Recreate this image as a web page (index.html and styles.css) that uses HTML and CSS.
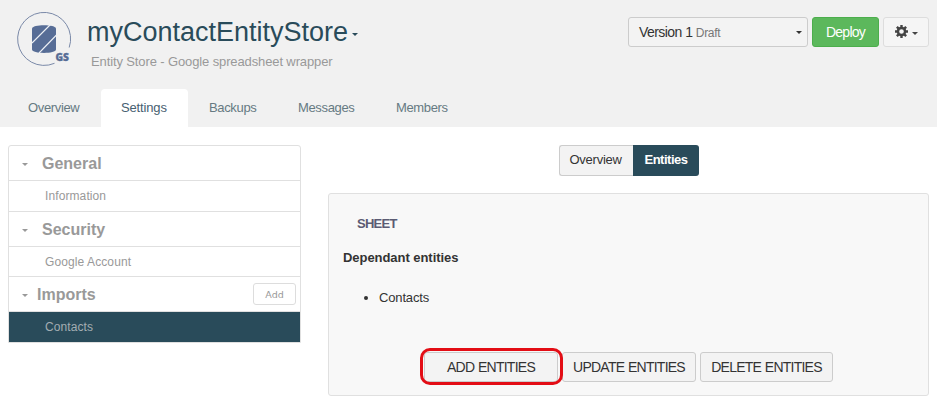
FILE: index.html
```html
<!DOCTYPE html>
<html lang="en">
<head>
<meta charset="utf-8">
<title>myContactEntityStore</title>
<link rel="stylesheet" href="styles.css">
</head>
<body>
<header class="header">
  <div class="masthead">
    <svg class="logo" width="56" height="56" viewBox="0 0 56 56">
      <path d="M38.500 52.300A26.500 26.500 0 1 1 53.200 36.500" fill="none" stroke="#7a89a8" stroke-width="1"/>
      <path d="M16 17.500c0-4.500 24-4.500 24 0v21c0 4.500-24 4.500-24 0z" fill="#576d96"/>
      <path d="M16 32L34.500 13.500M23 42L40.500 24" stroke="#edf0f5" stroke-width="1.100"/>
      <text class="logo-text" x="39.500" y="50" textLength="13.500" lengthAdjust="spacingAndGlyphs">GS</text>
    </svg>
    <div class="heading">
      <h1 class="title"><span>myContactEntityStore</span><i class="caret"></i></h1>
      <p class="subtitle">Entity Store - Google spreadsheet wrapper</p>
    </div>
    <div class="actions">
      <div class="version"><span>Version 1 <small>Draft</small></span><i class="caret"></i></div>
      <button class="deploy">Deploy</button>
      <button class="gear">
        <svg width="13" height="13" viewBox="0 0 12 12"><circle cx="6" cy="6" r="3.300" fill="none" stroke="#444" stroke-width="2.300"/><path d="M6 0v2M6 10v2M0 6h2M10 6h2M1.700 1.700l1.500 1.500M8.800 8.800l1.500 1.500M10.300 1.700L8.800 3.200M3.200 8.800l-1.500 1.500" stroke="#444" stroke-width="2.200"/></svg>
        <i class="caret"></i>
      </button>
    </div>
  </div>
  <nav class="tabs">
    <a class="tab tab-first">Overview</a><a class="tab active">Settings</a><a class="tab tab-backups">Backups</a><a class="tab tab-messages">Messages</a><a class="tab tab-members">Members</a>
  </nav>
</header>
<main class="content">
  <aside class="sidebar">
    <div class="group"><i class="caret"></i><b class="indented">General</b></div>
    <div class="item">Information</div>
    <div class="group"><i class="caret"></i><b class="indented">Security</b></div>
    <div class="item item-short">Google Account</div>
    <div class="group"><i class="caret"></i><b>Imports</b><button class="add">Add</button></div>
    <div class="item item-short selected">Contacts</div>
  </aside>
  <section class="main">
    <div class="switch"><span class="switch-left">Overview</span><span class="switch-right">Entities</span></div>
    <div class="panel">
      <h2 class="sheet">SHEET</h2>
      <h3 class="dependants">Dependant entities</h3>
      <ul class="list"><li>Contacts</li></ul>
      <div class="buttons">
        <button class="btn btn-add">ADD ENTITIES</button><button class="btn btn-update">UPDATE ENTITIES</button><button class="btn btn-delete">DELETE ENTITIES</button>
        <span class="highlight"></span>
      </div>
    </div>
  </section>
</main>
</body>
</html>
```
FILE: styles.css
```css
* { box-sizing: border-box; }
body { margin: 0; height: 403px; overflow: hidden; background: #fff; color: #333; font: 13px/18px "Liberation Sans", Arial, sans-serif; }
h1, h2, h3, p, ul { margin: 0; padding: 0; }
button { font: inherit; color: inherit; padding: 0; margin: 0; }
.header { height: 127px; background: #f1f1f1; }
.masthead { display: flex; height: 89px; padding-right: 8px; }
.logo { margin: 11px 0 0 16px; flex: none; }
.logo-text { font: 900 10px "Open Sans", sans-serif; fill: #576d96; stroke: #576d96; stroke-width: .3px; }
.caret { display: block; flex: none; border: 3px solid transparent; border-top-color: currentColor; border-bottom: 0; width: 0; height: 0; }
.heading { margin: 15px 0 0 15px; }
.title { display: flex; align-items: center; font-size: 27px; line-height: 34px; font-weight: 400; color: #294b5a; white-space: nowrap; }
.title .caret { margin: 5px 0 0 4px; }
.subtitle { margin: 4px 0 0 4px; color: #999; letter-spacing: -.12px; }
.actions { display: flex; margin: 17px 0 0 auto; height: 30px; }
.version { display: flex; align-items: center; justify-content: space-between; width: 180px; padding: 0 5px 0 10px; border: 1px solid #ccc; border-radius: 3px; background: #f3f3f3; font-size: 14px; letter-spacing: -.55px; }
.version small { font-size: 12px; letter-spacing: -.3px; color: #777; }
.deploy { width: 67px; margin-left: 4px; border: 1px solid #4cae4c; border-radius: 3px; background: #5cb85c; color: #fff; font-size: 14px; letter-spacing: -.75px; }
.gear { display: flex; align-items: center; gap: 4px; width: 46px; margin-left: 4px; padding: 0 0 1px 11px; border: 1px solid #ddd; border-radius: 3px; background: #f5f5f5; color: #444; }
.gear .caret { margin-top: 3px; }
.tabs { display: flex; height: 38px; }
.tab { line-height: 37px; padding-left: 21px; color: #667a82; letter-spacing: -.35px; }
.tab-first { width: 101px; padding-left: 28px; }
.active { width: 87px; padding-left: 20px; background: #fff; border-radius: 4px 4px 0 0; color: #476071; letter-spacing: -.15px; }
.tab-backups { width: 89px; }
.tab-messages { width: 98px; }
.content { display: flex; padding: 18px 8px 0; }
.sidebar { width: 293px; height: 198px; border: 1px solid #e0e0e0; border-radius: 3px 3px 0 0; color: #999; }
.group { display: flex; align-items: center; height: 35px; padding: 0 4px 0 13px; border-bottom: 1px solid #e0e0e0; }
.group b { margin: 2px 0 0 9px; font-size: 16px; }
.group .indented { margin-left: 14px; }
.group .caret { margin-top: 2px; }
.item { height: 31px; padding-left: 36px; line-height: 30px; border-bottom: 1px solid #e0e0e0; font-size: 12px; letter-spacing: .1px; }
.item-short { height: 30px; }
.selected { background: #294b5a; border: 0; color: #a3adb2; }
.add { width: 43px; height: 22px; margin-left: auto; border: 1px solid #ddd; border-radius: 3px; background: #fff; font: 9.5px "DejaVu Sans", sans-serif; }
.main { margin-left: 27px; width: 601px; }
.switch { display: flex; width: 140px; height: 31px; margin: 0 auto 17px; line-height: 29px; }
.switch-left { width: 74px; padding-left: 10px; border: 1px solid #ccc; border-right: 0; border-radius: 3px 0 0 3px; background: #f3f3f3; letter-spacing: -.25px; line-height: 28px; }
.switch-right { width: 66px; padding-left: 12px; border-radius: 0 3px 3px 0; background: #294b5a; color: #fff; font-weight: 700; letter-spacing: -.5px; }
.panel { height: 203px; border: 1px solid #e0e0e0; border-radius: 3px; background: #f8f8f8; padding-top: 21px; }
.sheet { margin-left: 28px; font-size: 13px; line-height: 18px; color: #5b5b73; letter-spacing: -.75px; }
.dependants { margin: 16px 0 0 14px; font-size: 13px; line-height: 18px; letter-spacing: -.05px; }
.list { margin: 22px 0 0 50px; letter-spacing: -.15px; }
.buttons { position: relative; display: flex; margin: 45px 0 0 95px; height: 30px; }
.btn { padding-bottom: 1px; border: 1px solid #ccc; border-radius: 3px; background: #f3f3f3; font-size: 14px; letter-spacing: -.75px; word-spacing: .5px; white-space: nowrap; }
.btn-add { width: 134px; }
.btn-update { width: 134px; margin-left: 4px; }
.btn-delete { width: 133px; margin-left: 4px; }
.highlight { position: absolute; left: -4px; top: -4px; width: 143px; height: 37px; border: 3px solid #e30d15; border-radius: 10px; }
```
